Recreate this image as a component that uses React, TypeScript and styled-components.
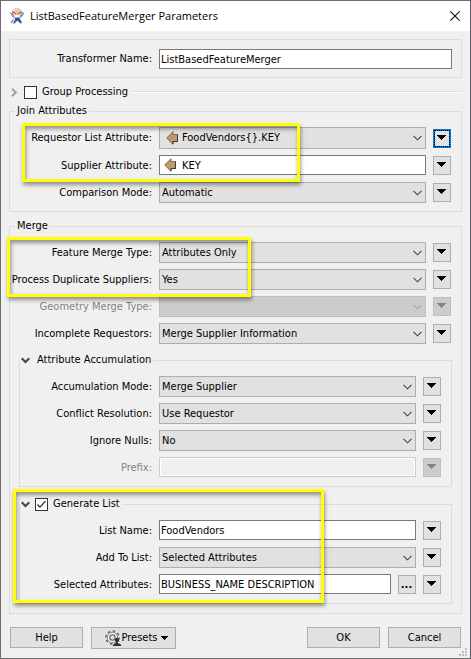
import React from 'react';
import styled, { createGlobalStyle, css } from 'styled-components';

const GlobalStyle = createGlobalStyle`
  *, *::before, *::after { box-sizing: border-box; }
  body {
    margin: 0;
    background: #f0f0f0;
    color: #000;
    font: 11px/14px "DejaVu Sans Condensed", "DejaVu Sans", Tahoma, sans-serif;
  }
  button, input, select { font: inherit; color: inherit; margin: 0; }
`;

const Dialog = styled.main`
  position: relative;
  display: flex;
  flex-direction: column;
  background: #f0f0f0;
  border: 1px solid #6d6d6d;
  border-right-color: #555b68;
`;

const TitleBar = styled.header`
  display: flex;
  align-items: center;
  height: 30px;
  padding: 0 9px 0 8px;
  background: #fff;
`;

const Title = styled.h1`
  flex: 1;
  margin: 0 0 0 5px;
  font: 11px/16px "Open Sans", "Segoe UI", sans-serif;
`;

const CloseButton = styled.button`
  display: flex;
  padding: 1px;
  border: 0;
  background: none;
`;

const Body = styled.form`
  display: flex;
  flex-direction: column;
  padding: 8px 8px 9px;
`;

const Panel = styled.div`
  padding: 9px 9px 8px 0;
  border: 1px solid #dcdcdc;
`;

const GroupHeader = styled.div`
  display: flex;
  align-items: center;
  gap: 5px;
  height: 16px;
  margin: 6px 0 3px;
  padding-left: 1px;

  &::after {
    content: "";
    flex: 1;
    height: 2px;
    border-top: 1px solid #dcdcdc;
    border-bottom: 1px solid #fff;
  }
`;

const Group = styled.fieldset<{ $nested?: boolean; $gap?: number }>`
  display: block;
  min-width: 0;
  margin: ${p => p.$gap ?? 0}px 0 0;
  padding: 8px 10px 8px 0;
  border: 1px solid #dcdcdc;
  ${p => p.$nested && css`
    margin-left: 9px;
    margin-right: -1px;
  `}
`;

const MergeGroup = styled(Group)`
  padding-bottom: 9px;
`;

const Legend = styled.legend`
  height: 16px;
  margin-left: 5px;
  padding: 0 2px;
  line-height: 16px;
`;

const ToggleLegend = styled.legend`
  display: flex;
  align-items: center;
  gap: 5px;
  height: 16px;
  padding: 0 2px 0 1px;
  line-height: 16px;
`;

const LegendText = styled.span`
  padding-left: 2px;
`;

const Rows = styled.div`
  position: relative;
  display: flex;
  flex-direction: column;
  gap: 6px;
`;

const Row = styled.div<{ $nested?: boolean; $plain?: boolean; $extra?: boolean }>`
  display: grid;
  grid-template-columns:
    ${p => (p.$nested ? 132 : 142)}px minmax(0, 1fr)
    ${p => (p.$extra ? '18px' : '')} ${p => (p.$plain ? '' : '18px')};
  column-gap: 7px;
  align-items: center;
  min-height: ${p => (p.$plain ? 20 : 21)}px;
`;

const Label = styled.label<{ $muted?: boolean }>`
  text-align: right;
  white-space: nowrap;
  color: ${p => (p.$muted ? '#838383' : '#000')};
`;

const Field = styled.div`
  position: relative;
  display: flex;
  align-self: start;
`;

const TextInput = styled.input<{ $icon?: boolean }>`
  flex: 1;
  min-width: 0;
  height: 20px;
  padding: 0 1px 0 ${p => (p.$icon ? 22 : 1)}px;
  border: 1px solid #7a7a7a;
  border-radius: 0;
  background: #fff;
  outline: none;

  &:disabled {
    border-color: #ccc;
    background: #f0f0f0;
    box-shadow: inset 0 0 0 1px #fff;
  }
`;

const SelectBox = styled.select<{ $icon?: boolean }>`
  flex: 1;
  min-width: 0;
  height: ${p => (p.$icon ? 22 : 21)}px;
  padding: 0 20px 0 ${p => (p.$icon ? 22 : 2)}px;
  appearance: none;
  border: 1px solid #adadad;
  border-radius: 0;
  background: #e1e1e1;
  outline: none;

  &:disabled { border-color: #bfbfbf; background: #ccc; opacity: 1; }
`;

const ChevronSlot = styled.span<{ $muted?: boolean }>`
  position: absolute;
  top: 0;
  bottom: 0;
  right: 4px;
  display: flex;
  align-items: center;
  pointer-events: none;
  color: ${p => (p.$muted ? '#a3a3a3' : '#444')};
`;

const IconSlot = styled.span<{ $left: number }>`
  position: absolute;
  top: 0;
  bottom: 0;
  left: ${p => p.$left}px;
  display: flex;
  align-items: center;
  pointer-events: none;
`;

const SmallButton = styled.button<{ $focused?: boolean }>`
  display: flex;
  align-items: center;
  justify-content: center;
  width: 18px;
  height: 19px;
  padding: 0 1px 2px 0;
  border: 1px solid #adadad;
  background: #e1e1e1;

  &:disabled { border-color: #bfbfbf; background: #ccc; color: #838383; }

  ${p => p.$focused && css`
    border-color: #0078d7;
    box-shadow: inset 0 0 0 1px #0078d7;
    outline: 1px dotted #000;
    outline-offset: -2px;
  `}
`;

const CheckWrap = styled.span`
  position: relative;
  display: flex;
  width: 13px;
  height: 13px;

  svg { position: absolute; inset: 0; pointer-events: none; }
`;

const Check = styled.input`
  appearance: none;
  width: 13px;
  height: 13px;
  border: 1px solid #333;
  background: #fff;
`;

const ExpandButton = styled.button`
  display: flex;
  align-items: center;
  justify-content: center;
  width: 9px;
  height: 13px;
  padding: 0;
  border: 0;
  background: none;
`;

const Highlight = styled.div<{ $top: number; $left: number; $width: number; $bottom: number }>`
  position: absolute;
  z-index: 2;
  top: ${p => p.$top}px;
  bottom: ${p => p.$bottom}px;
  left: ${p => p.$left}px;
  width: ${p => p.$width}px;
  border: 3px solid #ff0;
  pointer-events: none;
  box-shadow: 1px 3px 4px rgba(0, 0, 0, 0.4), inset 1px 3px 4px rgba(0, 0, 0, 0.4);
`;

const Anchor = styled.div`
  position: relative;
`;

const Footer = styled.footer`
  display: flex;
  align-items: flex-start;
  gap: 8px;
  margin-top: 13px;
  padding: 0 1px;
`;

const Spacer = styled.div`
  flex: 1;
`;

const PushButton = styled.button`
  display: flex;
  align-items: center;
  justify-content: center;
  width: 73px;
  height: 21px;
  padding: 0;
  border: 1px solid #adadad;
  background: #e1e1e1;
`;

const PresetsButton = styled(PushButton)`
  width: 85px;
  height: 22px;
  padding-left: 6px;

  svg:last-child { margin-left: 4px; }
`;

const Grip = styled.svg`
  position: absolute;
  right: 2px;
  bottom: 1px;
`;

const Chevron = () => (
  <svg width="9" height="6" viewBox="0 0 9 6" fill="none" stroke="currentColor" strokeWidth="1.1">
    <path d="M0.5 0.8L4.5 4.8L8.5 0.8" />
  </svg>
);

const Triangle = () => (
  <svg width="9" height="5" viewBox="0 0 9 5" fill="currentColor" shapeRendering="crispEdges">
    <path d="M0 0H9V1H8V2H7V3H6V4H5V5H4V4H3V3H2V2H1V1H0Z" />
  </svg>
);

const SmallTriangle = () => (
  <svg width="7" height="4" viewBox="0 0 7 4" fill="currentColor" shapeRendering="crispEdges">
    <path d="M0 0H7V1H6V2H5V3H4V4H3V3H2V2H1V1H0Z" />
  </svg>
);

const AttributeIcon = () => (
  <svg width="13" height="14" viewBox="0 0 13 14">
    <path d="M0.7 7L7 0.7V3.5H11.5V10.5H7V13.3Z" fill="#c2976a" stroke="#7a6654" />
    <path d="M11.5 3.5V10.5H7V13" fill="none" stroke="#3a3a3a" />
  </svg>
);

const ExpandIcon = ({ open }: { open?: boolean }) => (
  <svg width="9" height="9" viewBox="0 0 9 9" fill="none" stroke={open ? '#444' : '#a0a0a0'} strokeWidth="2">
    <path d={open ? 'M0.7 2.2L4.5 6L8.3 2.2' : 'M2 0.7L5.8 4.5L2 8.3'} />
  </svg>
);

const Tick = () => (
  <svg width="13" height="13" viewBox="0 0 13 13" fill="none" stroke="#222" strokeWidth="1.2">
    <path d="M2.5 6.5L5 9.2L10.5 3.2" />
  </svg>
);

const AppIcon = () => (
  <svg width="16" height="16" viewBox="0 0 16 16">
    <path d="M0.5 4L4 5.5L6 8L5.5 10.5L3 8.5Z" fill="#9a9fa8" />
    <path d="M15.5 4L12.5 5L10 8L10.5 10.5L14 8Z" fill="#9a9fa8" />
    <path d="M6 9.5H10L11.5 12L13 14.5L11.5 15.5L8.5 12.5L5.5 15.5H4L6 12Z" fill="#25539c" />
    <path d="M1.8 15L4.8 11.5" stroke="#8a93a5" strokeWidth="1.6" />
    <path d="M3.2 4.2C3.2 1.8 5.3 0.5 8 0.5S12.8 1.8 12.8 4.2Z" fill="#ece9e5" stroke="#bdb8b2" strokeWidth="0.8" />
    <path d="M5.2 4.5H10.8V7.5L9.8 9H6.2L5.2 7.5Z" fill="#efc39d" />
    <path d="M3.2 4.4H5.8M10.2 4.4H12.8" stroke="#d9352b" strokeWidth="1.5" />
    <path d="M6.2 2.6H9.8" stroke="#eebb35" strokeWidth="1.1" />
    <path d="M6 5.6H7.2M8.8 5.6H10" stroke="#6d5442" />
    <path d="M5.6 7.2H10.4V9H5.6Z" fill="#fff" />
  </svg>
);

const CloseIcon = () => (
  <svg width="10" height="10" viewBox="0 0 10 10" stroke="#111" strokeWidth="1.1">
    <path d="M0.3 0.3L9.7 9.7M9.7 0.3L0.3 9.7" />
  </svg>
);

const PresetsIcon = () => (
  <svg width="17" height="17" viewBox="0 0 17 17">
    <circle cx="7.5" cy="7.5" r="6.6" fill="none" stroke="#596165" strokeWidth="1.4" strokeDasharray="2.6 2.58" />
    <circle cx="7.5" cy="7.5" r="5.3" fill="#f2f3f3" stroke="#687074" strokeWidth="0.9" />
    <circle cx="7.5" cy="7.5" r="2.7" fill="#e1e1e1" stroke="#596165" strokeWidth="1.1" />
    <circle cx="12" cy="10" r="2.2" fill="#27353b" />
    <path d="M7.8 16C7.8 14 9.8 13.6 11.2 13.2V11.5H12.8V13.2C14.2 13.6 16.3 14 16.3 16Z" fill="#27353b" />
  </svg>
);

type FieldRowProps = {
  id: string;
  label: string;
  value?: string;
  text?: boolean;
  icon?: boolean;
  disabled?: boolean;
  nested?: boolean;
  plain?: boolean;
  browse?: boolean;
  focused?: boolean;
};

const DotsText = styled.span`
  padding-top: 2px;
  font-weight: bold;
`;

function FieldRow({ id, label, value = '', text, icon, disabled, nested, plain, browse, focused }: FieldRowProps) {
  return (
    <Row $nested={nested} $plain={plain} $extra={browse}>
      <Label htmlFor={id} $muted={disabled}>{label}</Label>
      <Field>
        {text ? (
          <TextInput id={id} type="text" defaultValue={value} disabled={disabled} $icon={icon} />
        ) : (
          <>
            <SelectBox id={id} defaultValue={value} disabled={disabled} $icon={icon}>
              <option>{value}</option>
            </SelectBox>
            <ChevronSlot $muted={disabled}><Chevron /></ChevronSlot>
          </>
        )}
        {icon && <IconSlot $left={text ? 5 : 7}><AttributeIcon /></IconSlot>}
      </Field>
      {browse && <SmallButton type="button" aria-label="Browse attributes"><DotsText>...</DotsText></SmallButton>}
      {!plain && (
        <SmallButton type="button" aria-label={`${label} options`} disabled={disabled} $focused={focused}>
          <Triangle />
        </SmallButton>
      )}
    </Row>
  );
}

export default function App() {
  return (
    <>
      <GlobalStyle />
      <Dialog>
        <TitleBar>
          <AppIcon />
          <Title>ListBasedFeatureMerger Parameters</Title>
          <CloseButton type="button" aria-label="Close"><CloseIcon /></CloseButton>
        </TitleBar>
        <Body onSubmit={e => e.preventDefault()}>
          <Panel>
            <FieldRow id="name" label="Transformer Name:" value="ListBasedFeatureMerger" text plain />
          </Panel>

          <GroupHeader>
            <ExpandButton type="button" aria-label="Expand Group Processing"><ExpandIcon /></ExpandButton>
            <CheckWrap><Check id="grouping" type="checkbox" /></CheckWrap>
            <label htmlFor="grouping">Group Processing</label>
          </GroupHeader>

          <Group>
            <Legend>Join Attributes</Legend>
            <Rows>
              <Anchor>
                <Rows>
                  <FieldRow id="requestor" label="Requestor List Attribute:" value="FoodVendors{}.KEY" icon focused />
                  <FieldRow id="supplier" label="Supplier Attribute:" value="KEY" text icon />
                </Rows>
                <Highlight $top={-4} $bottom={-6} $left={12} $width={278} />
              </Anchor>
              <FieldRow id="comparison" label="Comparison Mode:" value="Automatic" />
            </Rows>
          </Group>

          <MergeGroup $gap={6}>
            <Legend>Merge</Legend>
            <Rows>
              <Anchor>
                <Rows>
                  <FieldRow id="mergeType" label="Feature Merge Type:" value="Attributes Only" />
                  <FieldRow id="duplicates" label="Process Duplicate Suppliers:" value="Yes" />
                </Rows>
                <Highlight $top={-5} $bottom={-7} $left={-3} $width={244} />
              </Anchor>
              <FieldRow id="geometry" label="Geometry Merge Type:" disabled />
              <FieldRow id="incomplete" label="Incomplete Requestors:" value="Merge Supplier Information" />
            </Rows>

            <Group $nested $gap={8}>
              <ToggleLegend>
                <ExpandButton type="button" aria-label="Collapse Attribute Accumulation"><ExpandIcon open /></ExpandButton>
                <LegendText>Attribute Accumulation</LegendText>
              </ToggleLegend>
              <Rows>
                <FieldRow id="accumulation" label="Accumulation Mode:" value="Merge Supplier" nested />
                <FieldRow id="conflict" label="Conflict Resolution:" value="Use Requestor" nested />
                <FieldRow id="nulls" label="Ignore Nulls:" value="No" nested />
                <FieldRow id="prefix" label="Prefix:" text disabled nested />
              </Rows>
            </Group>

            <Anchor>
              <Group $nested $gap={9}>
                <ToggleLegend>
                  <ExpandButton type="button" aria-label="Collapse Generate List"><ExpandIcon open /></ExpandButton>
                  <CheckWrap><Check id="generate" type="checkbox" defaultChecked /><Tick /></CheckWrap>
                  <label htmlFor="generate">Generate List</label>
                </ToggleLegend>
                <Rows>
                  <FieldRow id="listName" label="List Name:" value="FoodVendors" text nested />
                  <FieldRow id="addTo" label="Add To List:" value="Selected Attributes" nested />
                  <FieldRow id="selected" label="Selected Attributes:" value="BUSINESS_NAME DESCRIPTION" text nested browse />
                </Rows>
              </Group>
              <Highlight $top={-7} $bottom={1} $left={3} $width={311} />
            </Anchor>
          </MergeGroup>

          <Footer>
            <PushButton type="button">Help</PushButton>
            <PresetsButton type="button"><PresetsIcon />Presets<SmallTriangle /></PresetsButton>
            <Spacer />
            <PushButton type="submit">OK</PushButton>
            <PushButton type="button">Cancel</PushButton>
          </Footer>
        </Body>
        <Grip width="9" height="9" viewBox="0 0 9 9" fill="#bdbdbd" aria-hidden="true">
          <path d="M6 0H8V2H6ZM3 3H5V5H3ZM6 3H8V5H6ZM0 6H2V8H0ZM3 6H5V8H3ZM6 6H8V8H6Z" />
        </Grip>
      </Dialog>
    </>
  );
}
